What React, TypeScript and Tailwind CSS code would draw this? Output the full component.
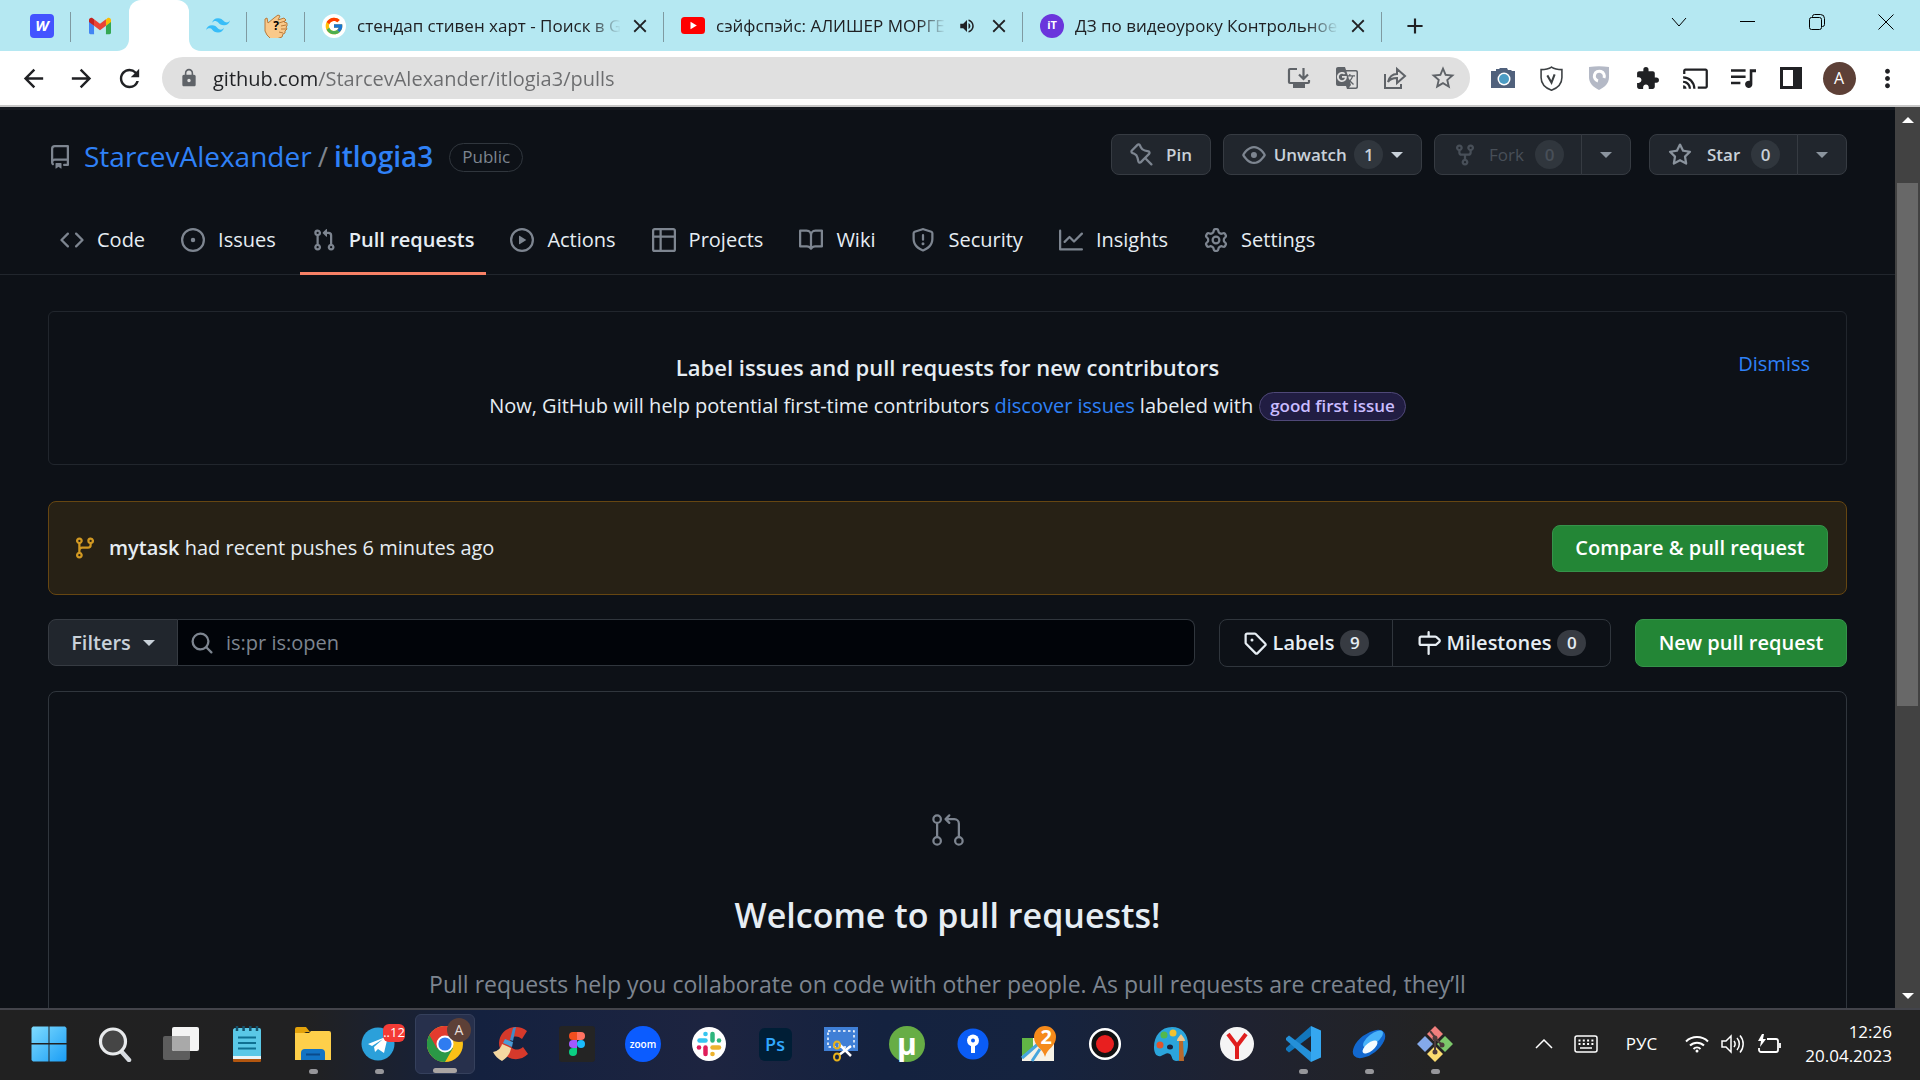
import React, { type ReactNode } from "react";
import {
  MdArrowBack,
  MdArrowForward,
  MdRefresh,
  MdLock,
  MdStarOutline,
  MdExtension,
  MdCast,
  MdMoreVert,
  MdGTranslate,
  MdClose,
  MdAdd,
  MdVolumeUp,
} from "react-icons/md";
import { FcGoogle } from "react-icons/fc";
import { GoGitPullRequest } from "react-icons/go";

const octicons = {
  repo: "M2 2.5A2.5 2.5 0 0 1 4.5 0h8.75a.75.75 0 0 1 .75.75v12.5a.75.75 0 0 1-.75.75h-2.5a.75.75 0 0 1 0-1.5h1.75v-2h-8a1 1 0 0 0-.714 1.7.75.75 0 1 1-1.072 1.05A2.495 2.495 0 0 1 2 11.5Zm10.5-1h-8a1 1 0 0 0-1 1v6.708A2.486 2.486 0 0 1 4.5 9h8ZM5 12.25a.25.25 0 0 1 .25-.25h3.5a.25.25 0 0 1 .25.25v3.25a.25.25 0 0 1-.4.2l-1.45-1.087a.249.249 0 0 0-.3 0L5.4 15.7a.25.25 0 0 1-.4-.2Z",
  code: "m11.28 3.22 4.25 4.25a.75.75 0 0 1 0 1.06l-4.25 4.25a.749.749 0 0 1-1.275-.326.749.749 0 0 1 .215-.734L13.94 8l-3.72-3.72a.749.749 0 0 1 .326-1.275.749.749 0 0 1 .734.215Zm-6.56 0a.751.751 0 0 1 1.042.018.751.751 0 0 1 .018 1.042L2.06 8l3.72 3.72a.749.749 0 0 1-.326 1.275.749.749 0 0 1-.734-.215L.47 8.53a.75.75 0 0 1 0-1.06Z",
  issue: "M8 9.5a1.5 1.5 0 1 0 0-3 1.5 1.5 0 0 0 0 3Z M8 0a8 8 0 1 1 0 16A8 8 0 0 1 8 0ZM1.5 8a6.5 6.5 0 1 0 13 0 6.5 6.5 0 0 0-13 0Z",
  pull: "M1.5 3.25a2.25 2.25 0 1 1 3 2.122v5.256a2.251 2.251 0 1 1-1.5 0V5.372A2.25 2.25 0 0 1 1.5 3.25Zm5.677-.177L9.573.677A.25.25 0 0 1 10 .854V2.5h1A2.5 2.5 0 0 1 13.5 5v5.628a2.251 2.251 0 1 1-1.5 0V5a1 1 0 0 0-1-1h-1v1.646a.25.25 0 0 1-.427.177L7.177 3.427a.25.25 0 0 1 0-.354ZM3.75 2.5a.75.75 0 1 0 0 1.5.75.75 0 0 0 0-1.5Zm0 9.5a.75.75 0 1 0 0 1.5.75.75 0 0 0 0-1.5Zm8.25.75a.75.75 0 1 0 1.5 0 .75.75 0 0 0-1.5 0Z",
  play: "M8 0a8 8 0 1 1 0 16A8 8 0 0 1 8 0ZM1.5 8a6.5 6.5 0 1 0 13 0 6.5 6.5 0 0 0-13 0Zm4.879-2.773 4.264 2.559a.25.25 0 0 1 0 .428l-4.264 2.559A.25.25 0 0 1 6 10.559V5.442a.25.25 0 0 1 .379-.215Z",
  table: "M0 1.75C0 .784.784 0 1.75 0h12.5C15.216 0 16 .784 16 1.75v12.5A1.75 1.75 0 0 1 14.25 16H1.75A1.75 1.75 0 0 1 0 14.25ZM6.5 6.5v8h7.75a.25.25 0 0 0 .25-.25V6.5Zm8-1.5V1.75a.25.25 0 0 0-.25-.25H6.5V5Zm-13 1.5v7.75c0 .138.112.25.25.25H5v-8ZM5 5V1.5H1.75a.25.25 0 0 0-.25.25V5Z",
  book: "M0 1.75A.75.75 0 0 1 .75 1h4.253c1.227 0 2.317.59 3 1.501A3.743 3.743 0 0 1 11.006 1h4.245a.75.75 0 0 1 .75.75v10.5a.75.75 0 0 1-.75.75h-4.507a2.25 2.25 0 0 0-1.591.659l-.622.621a.75.75 0 0 1-1.06 0l-.622-.621A2.25 2.25 0 0 0 5.258 13H.75a.75.75 0 0 1-.75-.75Zm7.251 10.324.004-5.073-.002-2.253A2.25 2.25 0 0 0 5.003 2.5H1.5v9h3.757a3.75 3.75 0 0 1 1.994.574ZM8.755 4.75l-.004 7.322a3.752 3.752 0 0 1 1.992-.572H14.5v-9h-3.495a2.25 2.25 0 0 0-2.25 2.25Z",
  shield: "M7.467.133a1.748 1.748 0 0 1 1.066 0l5.25 1.68A1.75 1.75 0 0 1 15 3.48V7c0 1.566-.32 3.182-1.303 4.682-.983 1.498-2.585 2.813-5.032 3.855a1.697 1.697 0 0 1-1.33 0c-2.447-1.042-4.049-2.357-5.032-3.855C1.32 10.182 1 8.566 1 7V3.48a1.75 1.75 0 0 1 1.217-1.667Zm.61 1.429a.25.25 0 0 0-.153 0l-5.25 1.68a.25.25 0 0 0-.174.238V7c0 1.358.275 2.666 1.057 3.86.784 1.194 2.121 2.34 4.366 3.297a.196.196 0 0 0 .154 0c2.245-.956 3.582-2.104 4.366-3.298C13.225 9.666 13.5 8.36 13.5 7V3.48a.251.251 0 0 0-.174-.237l-5.25-1.68ZM8.75 4.75v3a.75.75 0 0 1-1.5 0v-3a.75.75 0 0 1 1.5 0ZM9 10.5a1 1 0 1 1-2 0 1 1 0 0 1 2 0Z",
  graph: "M1.5 1.75V13.5h13.75a.75.75 0 0 1 0 1.5H.75a.75.75 0 0 1-.75-.75V1.75a.75.75 0 0 1 1.5 0Zm14.28 2.53-5.25 5.25a.75.75 0 0 1-1.06 0L7 7.06 4.28 9.78a.751.751 0 0 1-1.042-.018.751.751 0 0 1-.018-1.042l3.25-3.25a.75.75 0 0 1 1.06 0L10 7.94l4.72-4.72a.751.751 0 0 1 1.042.018.751.751 0 0 1 .018 1.042Z",
  gear: "M8 0a8.2 8.2 0 0 1 .701.031C9.444.095 9.99.645 10.16 1.29l.288 1.107c.018.066.079.158.212.224.231.114.454.243.668.386.123.082.233.09.299.071l1.103-.303c.644-.176 1.392.021 1.82.63.27.385.506.792.704 1.218.315.675.111 1.422-.364 1.891l-.814.806c-.049.048-.098.147-.088.294.016.257.016.515 0 .772-.01.147.038.246.088.294l.814.806c.475.469.679 1.216.364 1.891a7.977 7.977 0 0 1-.704 1.217c-.428.61-1.176.807-1.82.63l-1.102-.302c-.067-.019-.177-.011-.3.071a5.909 5.909 0 0 1-.668.386c-.133.066-.194.158-.211.224l-.29 1.106c-.168.646-.715 1.196-1.458 1.26a8.006 8.006 0 0 1-1.402 0c-.743-.064-1.289-.614-1.458-1.26l-.289-1.106c-.018-.066-.079-.158-.212-.224a5.738 5.738 0 0 1-.668-.386c-.123-.082-.233-.09-.299-.071l-1.103.303c-.644.176-1.392-.021-1.82-.63a8.12 8.12 0 0 1-.704-1.218c-.315-.675-.111-1.422.363-1.891l.815-.806c.05-.048.098-.147.088-.294a6.214 6.214 0 0 1 0-.772c.01-.147-.038-.246-.088-.294l-.815-.806C.635 6.045.431 5.298.746 4.623a7.92 7.92 0 0 1 .704-1.217c.428-.61 1.176-.807 1.82-.63l1.102.302c.067.019.177.011.3-.071.214-.143.437-.272.668-.386.133-.066.194-.158.211-.224l.29-1.106C6.009.645 6.556.095 7.299.03 7.53.01 7.764 0 8 0Zm-.571 1.525c-.036.003-.108.036-.137.146l-.289 1.105c-.147.561-.549.967-.998 1.189-.173.086-.34.183-.5.29-.417.278-.97.423-1.529.27l-1.103-.303c-.109-.03-.175.016-.195.045-.22.312-.412.644-.573.99-.014.031-.021.11.059.19l.815.806c.411.406.562.957.53 1.456a4.709 4.709 0 0 0 0 .582c.032.499-.119 1.05-.53 1.456l-.815.806c-.081.08-.073.159-.059.19.162.346.353.677.573.989.02.03.085.076.195.046l1.102-.303c.56-.153 1.113-.008 1.53.27.161.107.328.204.501.29.447.222.85.629.997 1.189l.289 1.105c.029.109.101.143.137.146a6.6 6.6 0 0 0 1.142 0c.036-.003.108-.036.137-.146l.289-1.105c.147-.561.549-.967.998-1.189.173-.086.34-.183.5-.29.417-.278.97-.423 1.529-.27l1.103.303c.109.029.175-.016.195-.045.22-.313.411-.644.573-.99.014-.031.021-.11-.059-.19l-.815-.806c-.411-.406-.562-.957-.53-1.456a4.709 4.709 0 0 0 0-.582c-.032-.499.119-1.05.53-1.456l.815-.806c.081-.08.073-.159.059-.19a6.464 6.464 0 0 0-.573-.989c-.02-.03-.085-.076-.195-.046l-1.102.303c-.56.153-1.113.008-1.53-.27a4.44 4.44 0 0 0-.501-.29c-.447-.222-.85-.629-.997-1.189l-.289-1.105c-.029-.11-.101-.143-.137-.146a6.6 6.6 0 0 0-1.142 0ZM11 8a3 3 0 1 1-6 0 3 3 0 0 1 6 0ZM9.5 8a1.5 1.5 0 1 0-3.001.001A1.5 1.5 0 0 0 9.5 8Z",
  pin: "M4.456.734a1.75 1.75 0 0 1 2.826.504l.613 1.327a3.081 3.081 0 0 0 2.084 1.707l2.454.584c1.332.317 1.8 1.972.832 2.94L11.06 10l3.72 3.72a.75.75 0 1 1-1.061 1.06L10 11.06l-2.204 2.205c-.968.968-2.623.5-2.94-.832l-.584-2.454a3.081 3.081 0 0 0-1.707-2.084l-1.327-.613a1.75 1.75 0 0 1-.504-2.826L4.456.734ZM5.92 1.866a.25.25 0 0 0-.404-.072L1.794 5.516a.25.25 0 0 0 .072.404l1.328.613A4.582 4.582 0 0 1 5.73 9.63l.584 2.454a.25.25 0 0 0 .42.12l5.47-5.47a.25.25 0 0 0-.12-.42L9.63 5.73a4.581 4.581 0 0 1-3.098-2.537L5.92 1.866Z",
  eye: "M8 2c1.981 0 3.671.992 4.933 2.078 1.27 1.091 2.187 2.345 2.637 3.023a1.62 1.62 0 0 1 0 1.798c-.45.678-1.367 1.932-2.637 3.023C11.67 13.008 9.981 14 8 14c-1.981 0-3.671-.992-4.933-2.078C1.797 10.83.88 9.576.43 8.898a1.62 1.62 0 0 1 0-1.798c.45-.677 1.367-1.931 2.637-3.022C4.33 2.992 6.019 2 8 2ZM1.679 7.932a.12.12 0 0 0 0 .136c.411.622 1.241 1.75 2.366 2.717C5.176 11.758 6.527 12.5 8 12.5c1.473 0 2.825-.742 3.955-1.715 1.124-.967 1.954-2.096 2.366-2.717a.12.12 0 0 0 0-.136c-.412-.621-1.242-1.75-2.366-2.717C10.824 4.242 9.473 3.5 8 3.5c-1.473 0-2.825.742-3.955 1.715-1.124.967-1.954 2.096-2.366 2.717ZM8 10a2 2 0 1 1-.001-3.999A2 2 0 0 1 8 10Z",
  fork: "M5 5.372v.878c0 .414.336.75.75.75h4.5a.75.75 0 0 0 .75-.75v-.878a2.25 2.25 0 1 1 1.5 0v.878a2.25 2.25 0 0 1-2.25 2.25h-1.5v2.128a2.251 2.251 0 1 1-1.5 0V8.5h-1.5A2.25 2.25 0 0 1 3.5 6.25v-.878a2.25 2.25 0 1 1 1.5 0ZM5 3.25a.75.75 0 1 0-1.5 0 .75.75 0 0 0 1.5 0Zm6.75.75a.75.75 0 1 0 0-1.5.75.75 0 0 0 0 1.5Zm-3 8.75a.75.75 0 1 0-1.5 0 .75.75 0 0 0 1.5 0Z",
  star: "M8 .25a.75.75 0 0 1 .673.418l1.882 3.815 4.21.612a.75.75 0 0 1 .416 1.279l-3.046 2.97.719 4.192a.751.751 0 0 1-1.088.791L8 12.347l-3.766 1.98a.75.75 0 0 1-1.088-.79l.72-4.194L.818 6.374a.75.75 0 0 1 .416-1.28l4.21-.611L7.327.668A.75.75 0 0 1 8 .25Zm0 2.445L6.615 5.5a.75.75 0 0 1-.564.41l-3.097.45 2.24 2.184a.75.75 0 0 1 .216.664l-.528 3.084 2.769-1.456a.75.75 0 0 1 .698 0l2.77 1.456-.53-3.084a.75.75 0 0 1 .216-.664l2.24-2.183-3.096-.45a.75.75 0 0 1-.564-.41L8 2.694Z",
  branch: "M9.5 3.25a2.25 2.25 0 1 1 3 2.122V6A2.5 2.5 0 0 1 10 8.5H6a1 1 0 0 0-1 1v1.128a2.251 2.251 0 1 1-1.5 0V5.372a2.25 2.25 0 1 1 1.5 0v1.836A2.493 2.493 0 0 1 6 7h4a1 1 0 0 0 1-1v-.628A2.25 2.25 0 0 1 9.5 3.25Zm-6 0a.75.75 0 1 0 1.5 0 .75.75 0 0 0-1.5 0Zm8.25-.75a.75.75 0 1 0 0 1.5.75.75 0 0 0 0-1.5ZM4.25 12a.75.75 0 1 0 0 1.5.75.75 0 0 0 0-1.5Z",
  search: "M10.68 11.74a6 6 0 0 1-7.922-8.982 6 6 0 0 1 8.982 7.922l3.04 3.04a.749.749 0 0 1-.326 1.275.749.749 0 0 1-.734-.215ZM11.5 7a4.499 4.499 0 1 0-8.997 0A4.499 4.499 0 0 0 11.5 7Z",
  tag: "M1 7.775V2.75C1 1.784 1.784 1 2.75 1h5.025c.464 0 .91.184 1.238.513l6.25 6.25a1.75 1.75 0 0 1 0 2.474l-5.026 5.026a1.75 1.75 0 0 1-2.474 0l-6.25-6.25A1.752 1.752 0 0 1 1 7.775Zm1.5 0c0 .066.026.13.073.177l6.25 6.25a.25.25 0 0 0 .354 0l5.025-5.025a.25.25 0 0 0 0-.354l-6.25-6.25a.25.25 0 0 0-.177-.073H2.75a.25.25 0 0 0-.25.25ZM6 5a1 1 0 1 1 0 2 1 1 0 0 1 0-2Z",
  milestone: "M7.75 0a.75.75 0 0 1 .75.75V3h3.634c.414 0 .814.147 1.13.414l2.07 1.75a1.75 1.75 0 0 1 0 2.672l-2.07 1.75a1.75 1.75 0 0 1-1.13.414H8.5v5.25a.75.75 0 0 1-1.5 0V10H2.75A1.75 1.75 0 0 1 1 8.25v-3.5C1 3.784 1.784 3 2.75 3H7V.75A.75.75 0 0 1 7.75 0Zm4.384 8.5a.25.25 0 0 0 .161-.06l2.07-1.75a.248.248 0 0 0 0-.38l-2.07-1.75a.25.25 0 0 0-.161-.06H2.75a.25.25 0 0 0-.25.25v3.5c0 .138.112.25.25.25h9.384Z",
};

function Octicon({ name, className = "" }: { name: keyof typeof octicons; className?: string }) {
  return (
    <svg viewBox="0 0 16 16" className={`size-6 shrink-0 fill-current ${className}`} aria-hidden="true">
      <path d={octicons[name]} />
    </svg>
  );
}

function Caret() {
  return (
    <svg viewBox="0 0 12 6" className="h-[6px] w-3 shrink-0 fill-current" aria-hidden="true">
      <path d="M0 0h12L6 6Z" />
    </svg>
  );
}

/* ---------- Browser tab strip ---------- */

function WebflowIcon() {
  return (
    <span className="flex size-6 items-center justify-center rounded-sm bg-[#4353ff] text-[15px] font-bold text-white italic">
      W
    </span>
  );
}

function GmailIcon() {
  return (
    <svg viewBox="0 0 24 18" className="h-[18px] w-[22px]" aria-hidden="true">
      <path d="M0 3v13.4C0 17.300.7 18 1.600 18H5.500V8.700Z" fill="#4285f4" />
      <path d="M24 3v13.400c0 .9-.7 1.600-1.600 1.600H18.500V8.700Z" fill="#34a853" />
      <path d="M18.500 2v6.700L24 4.600V2.500C24 .400 21.600-.700 20 .500Z" fill="#fbbc04" />
      <path d="M5.500 8.700V1.600L12 6.500l6.500-4.900v7.100L12 13.600Z" fill="#ea4335" />
      <path d="M0 2.500v2.100l5.500 4.100V1.600L4 .5C2.400-.700 0 .400 0 2.500Z" fill="#c5221f" />
    </svg>
  );
}

function TailwindIcon() {
  return (
    <svg viewBox="0 0 54 33" className="h-[15px] w-6 fill-[#38bdf8]" aria-hidden="true">
      <path d="M27 0c-7.200 0-11.700 3.600-13.500 10.800 2.700-3.600 5.850-4.950 9.450-4.050 2.054.513 3.522 2.004 5.147 3.653C30.744 13.090 33.808 16.200 40.500 16.200c7.200 0 11.700-3.600 13.500-10.800-2.700 3.600-5.850 4.950-9.450 4.050-2.054-.513-3.522-2.004-5.147-3.653C36.756 3.110 33.692 0 27 0ZM13.500 16.200C6.300 16.200 1.800 19.800 0 27c2.700-3.600 5.850-4.950 9.450-4.050 2.054.514 3.522 2.004 5.147 3.653C17.244 29.290 20.308 32.400 27 32.400c7.200 0 11.700-3.600 13.500-10.800-2.700 3.600-5.850 4.950-9.450 4.050-2.054-.513-3.522-2.004-5.147-3.653C23.256 19.310 20.192 16.200 13.500 16.200Z" />
    </svg>
  );
}

function HandIcon() {
  return (
    <span className="relative flex size-6 items-center justify-center">
      <svg viewBox="0 0 24 24" className="absolute inset-0" aria-hidden="true">
        <path
          d="M1 10V5l2-1 1 5 6-5 4-3 2 1-2 4 6-2 2 2-2 2 3 1v3l-1 1 1 2-2 2 0 2-2 1-1 3-3 1-4 2-3-1-3-1H6l-3-3-2-4Z"
          fill="#f9c98a"
          stroke="#b97a3a"
          strokeWidth="1"
        />
        <path d="M15 9l6-2M17 12l5-1M17 15l5 0M15 18l4 1" stroke="#b97a3a" strokeWidth="1" />
      </svg>
      <span className="relative text-xs font-bold text-black">?</span>
    </span>
  );
}

function YoutubeIcon() {
  return (
    <svg viewBox="0 0 24 17" className="h-[17px] w-6" aria-hidden="true">
      <rect width="24" height="17" rx="3.500" fill="#f00" />
      <path d="M9.500 4.800v7.400l6.300-3.700Z" fill="#fff" />
    </svg>
  );
}

function Separator() {
  return <span className="absolute top-3 right-0 h-[30px] w-px bg-[#7f9aa1]" />;
}

function PinnedTab({ label, children, divider = true }: { label: string; children: ReactNode; divider?: boolean }) {
  return (
    <button aria-label={label} className="relative flex w-[58px] shrink-0 items-center justify-center">
      {children}
      {divider && <Separator />}
    </button>
  );
}

function WideTab({ icon, title, sound = false }: { icon: ReactNode; title: string; sound?: boolean }) {
  return (
    <div className="relative flex w-[359px] min-w-0 items-center pr-[13px] pl-[17px]">
      <button className="flex min-w-0 flex-1 items-center gap-[11px] text-left">
        <span className="flex size-6 shrink-0 items-center justify-center">{icon}</span>
        <span className="min-w-0 flex-1 text-[17px] whitespace-nowrap text-[#202124] [mask-image:linear-gradient(to_right,black_88%,transparent)]">
          {title}
        </span>
      </button>
      {sound && (
        <button aria-label="Mute tab" className="ml-3 flex size-[18px] items-center justify-center">
          <MdVolumeUp className="size-[18px]" />
        </button>
      )}
      <button aria-label="Close tab" className={sound ? "ml-3" : "ml-2"}>
        <MdClose className="size-[22px]" />
      </button>
      <Separator />
    </div>
  );
}

function TabStrip() {
  return (
    <div className="flex h-[51px] shrink-0 bg-[#b5e8f2] pl-[13px] text-[#202124]">
      <PinnedTab label="Webflow">
        <WebflowIcon />
      </PinnedTab>
      <PinnedTab label="Gmail" divider={false}>
        <GmailIcon />
      </PinnedTab>
      <button aria-label="GitHub pull requests" className="relative w-[60px] shrink-0 rounded-t-xl bg-white">
        <svg viewBox="0 0 84 12" className="absolute bottom-0 -left-3 h-3 w-[84px] fill-white" aria-hidden="true">
          <path d="M0 12h84C77 12 72 7 72 0H12C12 7 7 12 0 12Z" />
        </svg>
      </button>
      <PinnedTab label="Tailwind CSS">
        <TailwindIcon />
      </PinnedTab>
      <PinnedTab label="Quiz">
        <HandIcon />
      </PinnedTab>
      <WideTab
        icon={
          <span className="flex size-6 items-center justify-center rounded-full bg-white">
            <FcGoogle className="size-5" />
          </span>
        }
        title="стендап стивен харт - Поиск в G"
      />
      <WideTab icon={<YoutubeIcon />} title="сэйфспэйс: АЛИШЕР МОРГЕ" sound />
      <WideTab
        icon={
          <span className="flex size-6 items-center justify-center rounded-full bg-[#6a35dc] text-[11px] font-bold text-white">
            iT
          </span>
        }
        title="ДЗ по видеоуроку Контрольное"
      />
      <button aria-label="New tab" className="ml-5 flex shrink-0 items-center">
        <MdAdd className="size-[26px]" />
      </button>
      <div className="ml-auto flex h-[43px] shrink-0 text-black">
        <button aria-label="Search tabs" className="flex w-[69px] items-center justify-center">
          <svg viewBox="0 0 16 10" className="h-[10px] w-4 fill-none stroke-current" aria-hidden="true">
            <path d="m1 1 7 8 7-8" />
          </svg>
        </button>
        <button aria-label="Minimize" className="flex w-[69px] items-center justify-center">
          <span className="h-px w-[15px] bg-black" />
        </button>
        <button aria-label="Restore" className="flex w-[69px] items-center justify-center">
          <svg viewBox="0 0 16 16" className="size-4 fill-none stroke-current" aria-hidden="true">
            <rect x=".5" y="3.500" width="12" height="12" rx="2" />
            <path d="M3.500 3V2.500a2 2 0 0 1 2-2h6a4 4 0 0 1 4 4v6a2 2 0 0 1-2 2H13" />
          </svg>
        </button>
        <button aria-label="Close window" className="flex w-[69px] items-center justify-center">
          <svg viewBox="0 0 16 16" className="size-4 fill-none stroke-current" aria-hidden="true">
            <path d="m.5.5 15 15M15.500.5l-15 15" />
          </svg>
        </button>
      </div>
    </div>
  );
}

/* ---------- Browser toolbar ---------- */

function ToolButton({ label, children }: { label: string; children: ReactNode }) {
  return (
    <button aria-label={label} className="flex w-12 shrink-0 items-center justify-center">
      {children}
    </button>
  );
}

function Toolbar() {
  return (
    <div className="flex shrink-0 items-center gap-[9px] border-b-2 border-[#c8c8c8] bg-white px-[9px] py-[6px] text-[#202124]">
      <div className="flex">
        <ToolButton label="Back">
          <MdArrowBack className="size-[29px]" />
        </ToolButton>
        <ToolButton label="Forward">
          <MdArrowForward className="size-[29px]" />
        </ToolButton>
        <ToolButton label="Reload">
          <MdRefresh className="size-[29px]" />
        </ToolButton>
      </div>
      <div className="flex h-[42px] min-w-0 flex-1 items-center rounded-full bg-[#e0e0e0] pr-[3px] pl-[17px]">
        <MdLock className="size-5 shrink-0 text-[#5f6368]" />
        <input
          aria-label="Address"
          defaultValue="github.com/StarcevAlexander/itlogia3/pulls"
          className="ml-[14px] h-full min-w-0 flex-1 bg-[linear-gradient(to_right,#202124_104px,#6b6c6e_104px)] bg-clip-text text-xl text-transparent outline-none"
        />
        <div className="flex text-[#5f6368]">
          <ToolButton label="Install app">
            <svg viewBox="0 0 24 24" className="size-6 fill-none stroke-current" aria-hidden="true">
              <path d="M10 3H3a1 1 0 0 0-1 1v12a1 1 0 0 0 1 1h18a1 1 0 0 0 1-1v-2" strokeWidth="2.200" />
              <path d="M16.500 2v10M12 8.500l4.500 4.500L21 8.500" strokeWidth="2.200" />
              <path d="M6 18h12v4H6Z" className="fill-current stroke-0" />
            </svg>
          </ToolButton>
          <ToolButton label="Translate">
            <MdGTranslate className="size-6" />
          </ToolButton>
          <ToolButton label="Share">
            <svg viewBox="0 0 24 24" className="size-6 fill-none stroke-current stroke-2" aria-hidden="true">
              <path d="M2 8v14h16v-4M14 8V3l8 7-8 7v-5c-4 0-7 1-9 4 1-4 4-8 9-8Z" />
            </svg>
          </ToolButton>
          <ToolButton label="Bookmark">
            <MdStarOutline className="size-7" />
          </ToolButton>
        </div>
      </div>
      <div className="flex">
        <ToolButton label="Screenshot">
          <svg viewBox="0 0 24 20" className="h-5 w-6" aria-hidden="true">
            <path d="M2 3h3V1h3l1-1h7l1 2h3l1 1h3v17H0V3Z" fill="#50617c" />
            <circle cx="13" cy="11" r="6.500" fill="#fff" />
            <circle cx="13" cy="11" r="5" fill="#4c9cc4" />
          </svg>
        </ToolButton>
        <ToolButton label="Protection">
          <svg viewBox="0 0 24 24" className="size-[25px] fill-none stroke-[#3c4043]" aria-hidden="true">
            <path d="M12 1c3 2 6 2.500 10 2.500V11c0 6-4 10-10 12.300C6 21 2 17 2 11V3.500C6 3.500 9 3 12 1Z" strokeWidth="1.500" />
            <path d="m8 9 4 7 3-8" strokeWidth="2" />
          </svg>
        </ToolButton>
        <ToolButton label="Ad blocker">
          <svg viewBox="0 0 20 24" className="h-6 w-5" aria-hidden="true">
            <path d="M0 1c7-1 13-1 20 0v10c0 6-4 10-10 13C4 21 0 17 0 11Z" fill="#b4b9c6" />
            <path d="M15 12a5 5 0 1 0-6 3" fill="none" stroke="#fff" strokeWidth="3" />
          </svg>
        </ToolButton>
        <ToolButton label="Extensions">
          <MdExtension className="size-[25px]" />
        </ToolButton>
        <ToolButton label="Cast">
          <MdCast className="size-[27px]" />
        </ToolButton>
        <ToolButton label="Media">
          <svg viewBox="0 0 24 20" className="h-[21px] w-[25px] fill-current" aria-hidden="true">
            <path d="M0 1h14v2.500H0ZM0 7h14v2.500H0ZM0 13h9v2.500H0ZM18 1h6v3h-3.500v11.500A3.500 3.500 0 1 1 18 12.200Z" />
          </svg>
        </ToolButton>
        <ToolButton label="Side panel">
          <svg viewBox="0 0 22 22" className="size-[22px]" aria-hidden="true">
            <path d="M0 0h22v22H0ZM3 3v16h10V3Z" fill="currentColor" fillRule="evenodd" />
          </svg>
        </ToolButton>
        <ToolButton label="Profile">
          <span className="flex size-[33px] items-center justify-center rounded-full bg-[#5d4037] text-base text-white">
            A
          </span>
        </ToolButton>
        <ToolButton label="Menu">
          <MdMoreVert className="size-[29px]" />
        </ToolButton>
      </div>
    </div>
  );
}

/* ---------- Repository page ---------- */

function Count({ children }: { children: ReactNode }) {
  return (
    <span className="flex h-[29px] min-w-[29px] items-center justify-center rounded-full bg-[#30363d] text-[17px]">
      {children}
    </span>
  );
}

const actionButton = "flex h-[41px] items-center border border-[#363b42] bg-[#21262d] text-[17px] font-semibold";

function RepoHeader() {
  return (
    <div className="flex items-start justify-between px-12 pt-6">
      <div className="flex h-[46px] items-center text-[28px]">
        <Octicon name="repo" className="text-[#7d8590]" />
        <a href="#owner" className="ml-3 text-[#2f81f7]">
          StarcevAlexander
        </a>
        <span className="mx-[6px] text-[#7d8590]">/</span>
        <a href="#repo" className="font-semibold text-[#2f81f7]">
          itlogia3
        </a>
        <span className="ml-4 flex h-[29px] items-center rounded-full border border-[#30363d] px-3 text-[17px] text-[#7d8590]">
          Public
        </span>
      </div>
      <div className="flex text-[#c9d1d9]">
        <button className={`${actionButton} w-[100px] justify-between rounded-lg px-[18px]`}>
          <Octicon name="pin" className="text-[#7d8590]" />
          Pin
        </button>
        <button className={`${actionButton} ml-3 w-[199px] justify-between rounded-lg px-[18px]`}>
          <Octicon name="eye" className="text-[#7d8590]" />
          Unwatch
          <Count>1</Count>
          <Caret />
        </button>
        <div className="ml-3 flex">
          <button disabled className={`${actionButton} w-[148px] rounded-l-lg pr-[17px] pl-[18px] text-[#484f58]`}>
            <Octicon name="fork" className="mr-3" />
            <span className="mr-auto font-normal">Fork</span>
            <Count>0</Count>
          </button>
          <button aria-label="Your forks" className={`${actionButton} -ml-px w-[50px] justify-center rounded-r-lg text-[#8b949e]`}>
            <Caret />
          </button>
        </div>
        <div className="ml-[18px] flex">
          <button className={`${actionButton} w-[149px] rounded-l-lg pr-[17px] pl-[18px]`}>
            <Octicon name="star" className="mr-[15px] text-[#8b949e]" />
            <span className="mr-auto">Star</span>
            <Count>0</Count>
          </button>
          <button aria-label="Star lists" className={`${actionButton} -ml-px w-[50px] justify-center rounded-r-lg text-[#8b949e]`}>
            <Caret />
          </button>
        </div>
      </div>
    </div>
  );
}

const navItems: { icon: keyof typeof octicons; label: string; active?: boolean }[] = [
  { icon: "code", label: "Code" },
  { icon: "issue", label: "Issues" },
  { icon: "pull", label: "Pull requests", active: true },
  { icon: "play", label: "Actions" },
  { icon: "table", label: "Projects" },
  { icon: "book", label: "Wiki" },
  { icon: "shield", label: "Security" },
  { icon: "graph", label: "Insights" },
  { icon: "gear", label: "Settings" },
];

function RepoNav() {
  return (
    <nav className="mt-7 flex gap-3 border-b border-[#21262d] px-12">
      {navItems.map((item) => (
        <a
          key={item.label}
          href={`#${item.label}`}
          className={
            item.active
              ? "relative flex h-[66px] items-center gap-[13px] px-3 pb-[2px] font-semibold after:absolute after:inset-x-0 after:-bottom-px after:h-[3px] after:bg-[#f78166]"
              : "flex h-[66px] items-center gap-[13px] px-3 pb-[2px]"
          }
        >
          <Octicon name={item.icon} className="text-[#7d8590]" />
          {item.label}
        </a>
      ))}
    </nav>
  );
}

function Content() {
  return (
    <main className="px-12 pt-9">
      <section className="relative h-[154px] rounded-md border border-[#21262d] pt-[37px] text-center">
        <h2 className="text-[22px] leading-9 font-semibold">Label issues and pull requests for new contributors</h2>
        <p className="mt-1 flex items-center justify-center gap-[6px] leading-[34px]">
          <span>
            Now, GitHub will help potential first-time contributors{" "}
            <a href="#discover" className="text-[#2f81f7]">
              discover issues
            </a>{" "}
            labeled with
          </span>
          <a
            href="#label"
            className="flex h-[29px] items-center rounded-full border border-[#4f4878] bg-[#211d42] px-[10px] text-[17px] font-semibold text-[#c9bcff]"
          >
            good first issue
          </a>
        </p>
        <button className="absolute top-[38px] right-9 text-[#2f81f7]">Dismiss</button>
      </section>

      <section className="mt-9 flex h-[94px] items-center rounded-lg border border-[#664611] bg-[#272115] pr-[18px] pl-6">
        <Octicon name="branch" className="text-[#d29922]" />
        <p className="ml-3">
          <strong className="font-semibold">mytask</strong> had recent pushes 6 minutes ago
        </p>
        <button className="ml-auto flex h-[47px] w-[276px] items-center justify-center rounded-lg border border-[#35934a] bg-[#238636] font-semibold text-white">
          Compare &amp; pull request
        </button>
      </section>

      <div className="mt-6 flex items-start gap-6">
        <div className="flex h-[47px] min-w-0 flex-1">
          <button className="flex w-[130px] shrink-0 items-center justify-center gap-3 rounded-l-lg border border-[#363b42] bg-[#21262d] font-semibold text-[#c9d1d9]">
            Filters
            <Caret />
          </button>
          <div className="flex min-w-0 flex-1 items-center gap-3 rounded-r-lg border border-l-0 border-[#30363d] bg-[#010409] pl-3 text-[#7d8590]">
            <Octicon name="search" />
            <input
              aria-label="Search pull requests"
              defaultValue="is:pr is:open"
              className="h-full min-w-0 flex-1 bg-transparent outline-none"
            />
          </div>
        </div>
        <div className="flex h-12">
          <a href="#labels" className="flex w-[174px] items-center justify-center gap-[6px] rounded-l-lg border border-[#30363d] font-semibold">
            <Octicon name="tag" />
            Labels
            <span className="flex h-[26px] w-[29px] items-center justify-center rounded-full bg-[#373b42] text-[17px]">9</span>
          </a>
          <a href="#milestones" className="-ml-px flex w-[219px] items-center justify-center gap-[6px] rounded-r-lg border border-[#30363d] font-semibold">
            <Octicon name="milestone" />
            Milestones
            <span className="flex h-[26px] w-[29px] items-center justify-center rounded-full bg-[#373b42] text-[17px]">0</span>
          </a>
        </div>
        <button className="flex h-12 w-[212px] items-center justify-center rounded-lg border border-[#35934a] bg-[#238636] font-semibold text-white">
          New pull request
        </button>
      </div>

      <section className="mt-6 rounded-lg border border-[#30363d] px-12 pt-[120px] pb-24 text-center">
        <GoGitPullRequest className="mx-auto size-9 text-[#7d8590]" />
        <h3 className="mt-10 text-[34px] leading-[54px] font-semibold">Welcome to pull requests!</h3>
        <p className="mx-auto mt-6 max-w-[1060px] text-[23px] leading-9 text-[#7d8590]">
          Pull requests help you collaborate on code with other people. As pull requests are created, they’ll
        </p>
      </section>
    </main>
  );
}

function Scrollbar() {
  return (
    <div className="flex w-[25px] shrink-0 flex-col bg-[#424242] text-white">
      <button aria-label="Scroll up" className="flex h-[25px] shrink-0 items-center justify-center">
        <svg viewBox="0 0 12 6" className="h-[6px] w-3 fill-current" aria-hidden="true">
          <path d="M0 6h12L6 0Z" />
        </svg>
      </button>
      <div className="flex min-h-0 flex-1 flex-col px-[2px]">
        <div className="h-[6%]" />
        <div className="h-[61.5%] bg-[#686868]" />
      </div>
      <button aria-label="Scroll down" className="flex h-[25px] shrink-0 items-center justify-center">
        <Caret />
      </button>
    </div>
  );
}

/* ---------- Taskbar ---------- */

const art = "size-9";

const apps: { name: string; icon: ReactNode; running?: boolean; active?: boolean }[] = [
  {
    name: "Start",
    icon: (
      <svg viewBox="0 0 36 36" className={art}>
        <defs>
          <linearGradient id="win" x1="0" y1="0" x2="1" y2="1" gradientUnits="objectBoundingBox">
            <stop offset="0" stopColor="#7fdcff" />
            <stop offset="1" stopColor="#1a9df5" />
          </linearGradient>
        </defs>
        <path d="M2 .5h15.500V17H.5V2ZM18.500.5H34l1.500 1.500v15h-17ZM.5 18.500h17v17H2L.5 34ZM18.500 18.500h17V34L34 35.500H18.500Z" fill="url(#win)" />
      </svg>
    ),
  },
  {
    name: "Search",
    icon: (
      <svg viewBox="0 0 36 36" className={art}>
        <path d="m24 25 8 9" stroke="#d7dbe0" strokeWidth="4.500" strokeLinecap="round" />
        <circle cx="16" cy="15.500" r="12.500" fill="#454545" stroke="#e8eaec" strokeWidth="3.200" />
      </svg>
    ),
  },
  {
    name: "Task view",
    icon: (
      <svg viewBox="0 0 36 36" className={art}>
        <rect y="10" width="27" height="24" rx="2" fill="#5d5d5d" />
        <rect x="9" y="1" width="27" height="24" rx="2" fill="#f4f4f4" />
        <path d="M9 10h18v15H11a2 2 0 0 1-2-2Z" fill="#a9a9a9" />
      </svg>
    ),
  },
  {
    name: "Notepad",
    icon: (
      <svg viewBox="0 0 36 36" className={art}>
        <rect x="4" y="31" width="28" height="5" rx="1" fill="#b3560f" />
        <rect x="4" y="28" width="28" height="5" fill="#e8f4f8" />
        <path d="M6 2h24a2 2 0 0 1 2 2v26H4V4c0-1 1-2 2-2Z" fill="#5ac8e6" />
        <path d="M9 11.500h18M9 17h18M9 22.500h18" stroke="#0f7092" strokeWidth="2" />
        <path d="M8 0v5M14.600 0v5M21.300 0v5M28 0v5" stroke="#14526b" strokeWidth="2.500" />
      </svg>
    ),
  },
  {
    name: "Explorer",
    running: true,
    icon: (
      <svg viewBox="0 0 36 36" className={art}>
        <path d="M0 3a2 2 0 0 1 2-2h9l4 5h-4l-11 6Z" fill="#e3a20b" />
        <path d="M0 7h14l2-2h18a2 2 0 0 1 2 2v27H0Z" fill="#fecf4a" />
        <path d="M6 34V27a4 4 0 0 1 4-4h16a4 4 0 0 1 4 4v7Z" fill="#1273c4" />
        <path d="M11 28.500h14" stroke="#0a4a8b" strokeWidth="2" />
      </svg>
    ),
  },
  {
    name: "Telegram",
    running: true,
    icon: (
      <span className="relative">
        <svg viewBox="0 0 36 36" className={art}>
          <circle cx="17" cy="18" r="16.500" fill="#2ba0da" />
          <path d="M7 18 27 10l-4 17-6-4-3 3-1-5 9-8-11 7Z" fill="#fff" />
        </svg>
        <span className="absolute -top-[2px] -right-2 flex h-[18px] w-[22px] items-center justify-center rounded-md bg-[#f43b36] text-[13px] text-white">
          ..12
        </span>
      </span>
    ),
  },
  {
    name: "Chrome",
    running: true,
    active: true,
    icon: (
      <span className="relative">
        <svg viewBox="0 0 36 36" className={art}>
          <circle cx="18" cy="18" r="18" fill="#fbc116" />
          <path d="M18 18 2.400 9A18 18 0 0 0 18 36l8-14Z" fill="#2a9846" />
          <path d="M18 18 10 22.500 2.400 9A18 18 0 0 1 33.600 9Z" fill="#e33b2e" />
          <circle cx="18" cy="18" r="8.500" fill="#fff" />
          <circle cx="18" cy="18" r="6.600" fill="#2f7cf0" />
        </svg>
        <span className="absolute -top-2 -right-2 flex size-6 items-center justify-center rounded-full bg-[#5d4037] text-sm text-[#e6dcd8]">
          A
        </span>
      </span>
    ),
  },
  {
    name: "CCleaner",
    icon: (
      <svg viewBox="0 0 36 36" className={art}>
        <path d="M34 5C25-3 7 1 6 17c0 14 18 22 29 11l-5-7c-6 5-13 2-13-4s6-9 12-4Z" fill="#d6392b" />
        <path d="m20 2 3-1-3 14-3-1Z" fill="#3f8bc9" />
        <path d="m12 13 8 3-1 5-9-4Z" fill="#4b9bd6" />
        <path d="m9 18 9 4c-1 6-4 10-9 13-4-2-7-5-9-9 5-1 8-4 9-8Z" fill="#f3d7a1" />
      </svg>
    ),
  },
  {
    name: "Figma",
    icon: (
      <svg viewBox="0 0 36 36" className={art}>
        <rect width="36" height="36" rx="3" fill="#242424" />
        <path d="M14 6h4v8h-4a4 4 0 0 1 0-8Z" fill="#f24e1e" />
        <path d="M18 6h4a4 4 0 0 1 0 8h-4Z" fill="#ff7262" />
        <path d="M14 14h4v8h-4a4 4 0 0 1 0-8Z" fill="#a259ff" />
        <circle cx="22" cy="18" r="4" fill="#1abcfe" />
        <path d="M14 22h4v4a4 4 0 1 1-4-4Z" fill="#0acf83" />
      </svg>
    ),
  },
  {
    name: "Zoom",
    icon: (
      <span className="flex size-9 items-center justify-center rounded-full bg-[#0b5cff] text-[10px] font-semibold text-white">
        zoom
      </span>
    ),
  },
  {
    name: "Slack",
    icon: (
      <svg viewBox="0 0 36 36" className={art}>
        <circle cx="18" cy="18" r="17" fill="#fff" />
        <g strokeWidth="4.500" strokeLinecap="round">
          <path d="M8.500 14.500h6" stroke="#36c5f0" />
          <path d="M21.500 8v6.500" stroke="#2eb67d" />
          <path d="M21.500 21.500H28" stroke="#ecb22e" />
          <path d="M14.500 21.500V28" stroke="#e01e5a" />
        </g>
        <circle cx="14.500" cy="8" r="2.300" fill="#36c5f0" />
        <circle cx="28" cy="14.500" r="2.300" fill="#2eb67d" />
        <circle cx="21.500" cy="28" r="2.300" fill="#ecb22e" />
        <circle cx="8" cy="21.500" r="2.300" fill="#e01e5a" />
      </svg>
    ),
  },
  {
    name: "Photoshop",
    icon: (
      <span className="flex size-[33px] items-center justify-center rounded-md bg-[#001e36] text-lg font-semibold text-[#31a8ff]">
        Ps
      </span>
    ),
  },
  {
    name: "Screen clip",
    icon: (
      <svg viewBox="0 0 36 36" className={art}>
        <rect x="1" y="1" width="34" height="24" fill="#3f7fd6" />
        <rect x="5" y="5" width="26" height="16" fill="none" stroke="#fff" strokeWidth="1.500" strokeDasharray="2.500 2.500" />
        <path d="m16 18 12 12M28 20 16 29" stroke="#fff" strokeWidth="2.500" />
        <ellipse cx="14" cy="19" rx="3" ry="3.500" fill="none" stroke="#e8b21c" strokeWidth="2" />
        <ellipse cx="14" cy="31" rx="3" ry="3.500" fill="none" stroke="#e8b21c" strokeWidth="2" />
      </svg>
    ),
  },
  {
    name: "uTorrent",
    icon: (
      <span className="flex size-9 items-center justify-center rounded-full bg-[#67ad45] text-[30px] leading-9 font-bold text-white">
        µ
      </span>
    ),
  },
  {
    name: "Passwords",
    icon: (
      <svg viewBox="0 0 36 36" className={art}>
        <circle cx="18" cy="18" r="15.500" fill="#0a5cf5" />
        <circle cx="18" cy="14.500" r="6" fill="#fff" />
        <path d="M16 18h4v9h-4Z" fill="#fff" />
        <circle cx="18" cy="14.500" r="2" fill="#0a5cf5" />
      </svg>
    ),
  },
  {
    name: "2GIS",
    icon: (
      <span className="relative">
        <svg viewBox="0 0 36 36" className={art}>
          <path d="M1 12h32v23H1Z" fill="#f6f2e6" />
          <path d="M1 12h11v10L1 30Z" fill="#62b545" />
          <path d="m1 32 16-14M11 35l8-12" stroke="#47a6dd" strokeWidth="3" />
          <path d="M24 31c-2-9-11-10-11-20a11 11 0 0 1 22 0c0 10-9 11-11 20Z" fill="#f58a1b" />
        </svg>
        <span className="absolute -top-px right-[5px] text-xl leading-6 font-bold text-white">2</span>
      </span>
    ),
  },
  {
    name: "Recorder",
    icon: (
      <svg viewBox="0 0 36 36" className={art}>
        <circle cx="18" cy="18" r="14.800" fill="#111" stroke="#fff" strokeWidth="2.500" />
        <circle cx="18" cy="18" r="9" fill="#e81f1f" />
      </svg>
    ),
  },
  {
    name: "Paint",
    icon: (
      <svg viewBox="0 0 36 36" className={art}>
        <path d="M19 1C8 1 1 10 1 21c0 7 3 10 7 9 4-2 6-4 9-2 3 3 1 6 6 7 8 0 12-8 12-17C35 8 29 1 19 1Z" fill="#2ba5dc" />
        <circle cx="11" cy="9" r="3.500" fill="#53b94b" />
        <circle cx="20" cy="7" r="3.500" fill="#f2c230" />
        <circle cx="7" cy="19" r="3.500" fill="#e0542d" />
        <ellipse cx="17" cy="21" rx="3" ry="2.500" fill="#17233f" />
        <path d="M26 15h4l1 20h-5Z" fill="#b8692c" />
        <path d="M24 15c0-3 3-5 4-7 1 2 4 4 4 7Z" fill="#f0c78c" />
      </svg>
    ),
  },
  {
    name: "Yandex",
    icon: (
      <svg viewBox="0 0 36 36" className={art}>
        <circle cx="18" cy="18" r="17" fill="#f5f5f5" />
        <path d="m9 8 9 12 9-12M18 20v13" fill="none" stroke="#e01e1e" strokeWidth="4" />
      </svg>
    ),
  },
  {
    name: "VS Code",
    running: true,
    icon: (
      <svg viewBox="0 0 36 36" className={art}>
        <path d="M26 0v10L4 26.500l-3-2.500v-2Z" fill="#1277bd" />
        <path d="M26 36V26L4 9.500 1 12v2Z" fill="#2490d8" />
        <path d="m26 0 10 4.500v27L26 36Z" fill="#35a7f0" />
      </svg>
    ),
  },
  {
    name: "Planet",
    running: true,
    icon: (
      <svg viewBox="0 0 36 36" className={art}>
        <ellipse cx="18" cy="18" rx="19" ry="10" transform="rotate(-38 18 18)" fill="#1268cf" />
        <ellipse cx="22" cy="13" rx="12" ry="5" transform="rotate(-38 22 13)" fill="#49b3fa" />
        <ellipse cx="19" cy="21" rx="9" ry="4" transform="rotate(-38 19 21)" fill="#f4fbff" />
      </svg>
    ),
  },
  {
    name: "Git",
    running: true,
    icon: (
      <svg viewBox="0 0 36 36" className={art}>
        <path d="m18 0 8 8-8 8-8-8Z" fill="#f07f7d" />
        <path d="m8 10 8 8-8 8-8-8Z" fill="#84a9ea" />
        <path d="m28 10 8 8-8 8-8-8Z" fill="#7cc86b" />
        <path d="m18 20 8 8-8 8-8-8Z" fill="#fbdc70" />
        <path d="M13 5l5 6v15M18 12l7 7" stroke="#4c3b3b" strokeWidth="2" fill="none" />
        <circle cx="18" cy="12" r="2.500" fill="#4c3b3b" />
        <circle cx="25" cy="19" r="2.500" fill="#4c3b3b" />
        <circle cx="18" cy="26" r="2.500" fill="#4c3b3b" />
      </svg>
    ),
  },
];

function Taskbar() {
  return (
    <footer className="flex h-[72px] shrink-0 items-stretch border-t-2 border-[#43444b] bg-[linear-gradient(to_right,#212121_0%,#212122_16%,#14213f_25%,#1d2440_37%,#14223f_46%,#15233f_54%,#1f2230_65%,#232323_75%,#232323_100%)] pr-7 pb-[2px] pl-4 text-white">
      {apps.map((app) => (
        <button key={app.name} aria-label={app.name} className="flex w-[66px] shrink-0 items-center justify-center">
          <span
            className={
              app.active
                ? "relative flex size-[60px] items-center justify-center rounded-md border border-[#35405c] bg-[#27304c]"
                : "relative flex size-[60px] items-center justify-center"
            }
          >
            {app.icon}
            {app.running && (
              <span className={app.active ? "absolute bottom-0 h-[5px] w-6 rounded-full bg-[#aaa5a3]" : "absolute bottom-0 h-[5px] w-[9px] rounded-full bg-[#96969a]"} />
            )}
          </span>
        </button>
      ))}
      <div className="ml-auto flex items-center">
        <button aria-label="Hidden icons" className="mr-[21px]">
          <svg viewBox="0 0 18 10" className="h-[10px] w-[18px] fill-none stroke-current" aria-hidden="true">
            <path d="m1 9 8-8 8 8" strokeWidth="1.500" />
          </svg>
        </button>
        <button aria-label="Touch keyboard" className="mr-7">
          <svg viewBox="0 0 24 18" className="h-[18px] w-6 fill-none stroke-current" aria-hidden="true">
            <rect x="1" y="1" width="22" height="16" rx="2" strokeWidth="1.500" />
            <path d="M4.500 5.500h15M4.500 9h15" strokeWidth="2" strokeDasharray="2 2.300" />
            <path d="M6 13h12" strokeWidth="1.500" />
          </svg>
        </button>
        <button className="mr-7 text-[17px]">РУС</button>
        <button aria-label="Network, sound and battery" className="mr-6 flex items-center gap-3">
          <svg viewBox="0 0 24 18" className="h-[18px] w-6 fill-none stroke-current stroke-2" aria-hidden="true">
            <path d="M1 6.500a16 16 0 0 1 22 0M5 10.500a10 10 0 0 1 14 0M8.500 14a5 5 0 0 1 7 0" />
            <circle cx="12" cy="16" r="1.500" className="fill-current stroke-0" />
          </svg>
          <svg viewBox="0 0 24 20" className="h-5 w-6 fill-none stroke-current" aria-hidden="true">
            <path d="M1 7h4l5-5v16l-5-5H1Z" strokeWidth="1.500" />
            <path d="M13 7a5 5 0 0 1 0 6M16 4a9 9 0 0 1 0 12M19 1.500a13 13 0 0 1 0 17" strokeWidth="1.500" />
          </svg>
          <svg viewBox="0 0 24 20" className="h-5 w-6 fill-none stroke-current" aria-hidden="true">
            <path d="M10 5h9a2 2 0 0 1 2 2v9a2 2 0 0 1-2 2H4a2 2 0 0 1-2-2v-2M23 9v5" strokeWidth="1.800" />
            <path d="M5 0 1 7h3l-1 6 6-8H6l1-5Z" className="fill-current stroke-0" />
          </svg>
        </button>
        <button className="text-right text-[17px] leading-6">
          12:26
          <br />
          20.04.2023
        </button>
      </div>
    </footer>
  );
}

export default function App() {
  return (
    <div className="flex h-screen flex-col overflow-hidden font-['Open_Sans','Noto_Sans',sans-serif]">
      <TabStrip />
      <Toolbar />
      <div className="flex min-h-0 flex-1">
        <div className="min-w-0 flex-1 overflow-hidden border-t-[3px] border-[#161b22] bg-[#0d1117] text-xl text-[#e6edf3]">
          <RepoHeader />
          <RepoNav />
          <Content />
        </div>
        <Scrollbar />
      </div>
      <Taskbar />
    </div>
  );
}
